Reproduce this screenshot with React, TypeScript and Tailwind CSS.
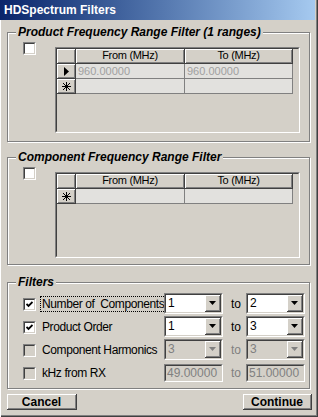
import React from 'react';

const sunkenOuter = 'border border-t-[#808080] border-l-[#808080] border-b-white border-r-white';
const sunkenInner = 'border border-t-[#404040] border-l-[#404040] border-b-[#d4d0c8] border-r-[#d4d0c8]';
const raised = 'border-r border-b border-[#404040] shadow-[inset_1px_1px_0_#fff,inset_-1px_-1px_0_#808080]';

function Check({ checked, disabled }: { checked?: boolean; disabled?: boolean }) {
  return (
    <div className={`w-[13px] h-[13px] shrink-0 ${sunkenOuter}`}>
      <div className={`w-full h-full ${sunkenInner} ${disabled ? 'bg-[#d4d0c8]' : 'bg-white'} flex items-center justify-center`}>
        {checked && (
          <svg width="7" height="7" viewBox="0 0 7 7">
            <polyline points="0.5,3 2.5,5 6.5,1" fill="none" stroke="#000" strokeWidth="1.8" />
          </svg>
        )}
      </div>
    </div>
  );
}

function Combo({ value, disabled }: { value: string; disabled?: boolean }) {
  return (
    <div className={`w-[59px] h-[21px] shrink-0 ${sunkenOuter}`}>
      <div className={`h-full flex ${sunkenInner} ${disabled ? 'bg-[#d4d0c8] text-[#808080]' : 'bg-white text-black'}`}>
        <span className="flex-1 pl-[2px] text-[12px] leading-[17px]">{value}</span>
        <div className={`w-[16px] h-full bg-[#d4d0c8] flex items-center justify-center ${raised}`}>
          <svg width="7" height="4" viewBox="0 0 7 4">
            <polygon points="0,0 7,0 3.5,4" fill={disabled ? '#808080' : '#000'} />
          </svg>
        </div>
      </div>
    </div>
  );
}

function TextBox({ value }: { value: string }) {
  return (
    <div className={`w-[59px] h-[18px] shrink-0 ${sunkenOuter}`}>
      <div className={`h-full ${sunkenInner} bg-[#d4d0c8] text-[#808080] text-[12px] leading-[14px] pl-[1px]`}>{value}</div>
    </div>
  );
}

function Group({ title, className, children }: { title: string; className?: string; children: React.ReactNode }) {
  return (
    <div className={`relative ml-[7px] w-[303px] border border-[#808080] shadow-[inset_1px_1px_0_#fff,1px_1px_0_#fff] ${className ?? ''}`}>
      <span className="absolute -top-[8px] left-[8px] px-[2px] bg-[#d4d0c8] font-bold italic text-[12px] leading-[14px] whitespace-nowrap">
        {title}
      </span>
      {children}
    </div>
  );
}

function Star() {
  return (
    <svg width="9" height="9" viewBox="0 0 9 9" stroke="#000" strokeWidth="1">
      <line x1="4.5" y1="0" x2="4.5" y2="9" />
      <line x1="0" y1="4.5" x2="9" y2="4.5" />
      <line x1="1" y1="1" x2="8" y2="8" />
      <line x1="8" y1="1" x2="1" y2="8" />
    </svg>
  );
}

function Grid({ rows }: { rows: string[][] }) {
  return (
    <div className={`mt-[5px] ml-[19px] w-[245px] h-[86px] ${sunkenOuter}`}>
      <div className={`h-full ${sunkenInner} bg-[#d4d0c8]`}>
        <div className="flex h-[15px] text-[11px] leading-[13px] tracking-[-0.3px]">
          <div className={`w-[19px] ${raised}`} />
          <div className={`w-[109px] text-center ${raised}`}>From (MHz)</div>
          <div className={`w-[108px] text-center ${raised}`}>To (MHz)</div>
        </div>
        {rows.map((r, i) => (
          <div key={i} className="flex h-[15px] text-[11px] leading-[14px] text-[#a0a0a0]">
            <div className={`w-[19px] flex items-center justify-center bg-[#d4d0c8] ${raised}`}>
              {i === rows.length - 1 ? (
                <Star />
              ) : (
                <svg width="5" height="9" viewBox="0 0 5 9">
                  <polygon points="0,0 5,4.5 0,9" fill="#000" />
                </svg>
              )}
            </div>
            <div className="w-[109px] bg-[#e2e1de] border-r border-b border-[#808080] pl-[2px]">{r[0]}</div>
            <div className="w-[108px] bg-[#e2e1de] border-r border-b border-[#808080] pl-[2px]">{r[1]}</div>
          </div>
        ))}
      </div>
    </div>
  );
}

const filters = [
  { label: 'Number of  Components', checked: true, from: '1', to: '2', focus: true },
  { label: 'Product Order', checked: true, from: '1', to: '3' },
  { label: 'Component Harmonics', checked: false, from: '3', to: '3', disabled: true },
  { label: 'kHz from RX', checked: false, from: '49.00000', to: '51.00000', disabled: true, text: true },
];

export default function App() {
  return (
    <div className="w-[318px] h-[417px] bg-[#d4d0c8] flex flex-col overflow-hidden font-['Liberation_Sans',Arial,sans-serif] text-black shadow-[inset_1px_0_0_#fff,inset_-1px_-1px_0_#404040,inset_-2px_-2px_0_#808080]">
      <div className="h-[20px] mr-[3px] shrink-0 bg-linear-to-r from-[#0a246a] to-[#a6caf0] flex items-center pl-[4px] text-white font-bold text-[12px]">
        HDSpectrum Filters
      </div>

      <Group title="Product Frequency Range Filter (1 ranges)" className="mt-[12px] h-[110px] shrink-0 pt-[9px] pl-[15px] flex items-start">
        <Check />
        <Grid rows={[['960.00000', '960.00000'], ['', '']]} />
      </Group>

      <Group title="Component Frequency Range Filter" className="mt-[15px] h-[108px] shrink-0 pt-[9px] pl-[15px] flex items-start">
        <Check />
        <Grid rows={[['', '']]} />
      </Group>

      <Group title="Filters" className="mt-[17px] h-[107px] shrink-0 pt-[9px] pl-[15px]">
        {filters.map((f) => (
          <div key={f.label} className="flex items-center h-[23px] text-[12px]">
            <div className="mt-[2px]">
              <Check checked={f.checked} disabled={f.disabled} />
            </div>
            <div className="w-[128px] pl-[4px]">
              <span
                className={`whitespace-pre tracking-[-0.4px] leading-[14px] ${
                  f.focus ? 'border border-dotted border-black px-[1px]' : 'px-[2px]'
                }`}
              >
                {f.label}
              </span>
            </div>
            {f.text ? <TextBox value={f.from} /> : <Combo value={f.from} disabled={f.disabled} />}
            <span className={`w-[23px] pl-[8px] ${f.disabled ? 'text-[#808080]' : ''}`}>to</span>
            {f.text ? <TextBox value={f.to} /> : <Combo value={f.to} disabled={f.disabled} />}
          </div>
        ))}
      </Group>

      <div className="mt-[5px] flex justify-between pl-[7px] pr-[6px]">
        <button className={`w-[70px] h-[16px] bg-[#d4d0c8] font-bold text-[12px] leading-[12px] ${raised}`}>Cancel</button>
        <button className={`w-[69px] h-[16px] bg-[#d4d0c8] font-bold text-[12px] leading-[12px] ${raised}`}>Continue</button>
      </div>
    </div>
  );
}
